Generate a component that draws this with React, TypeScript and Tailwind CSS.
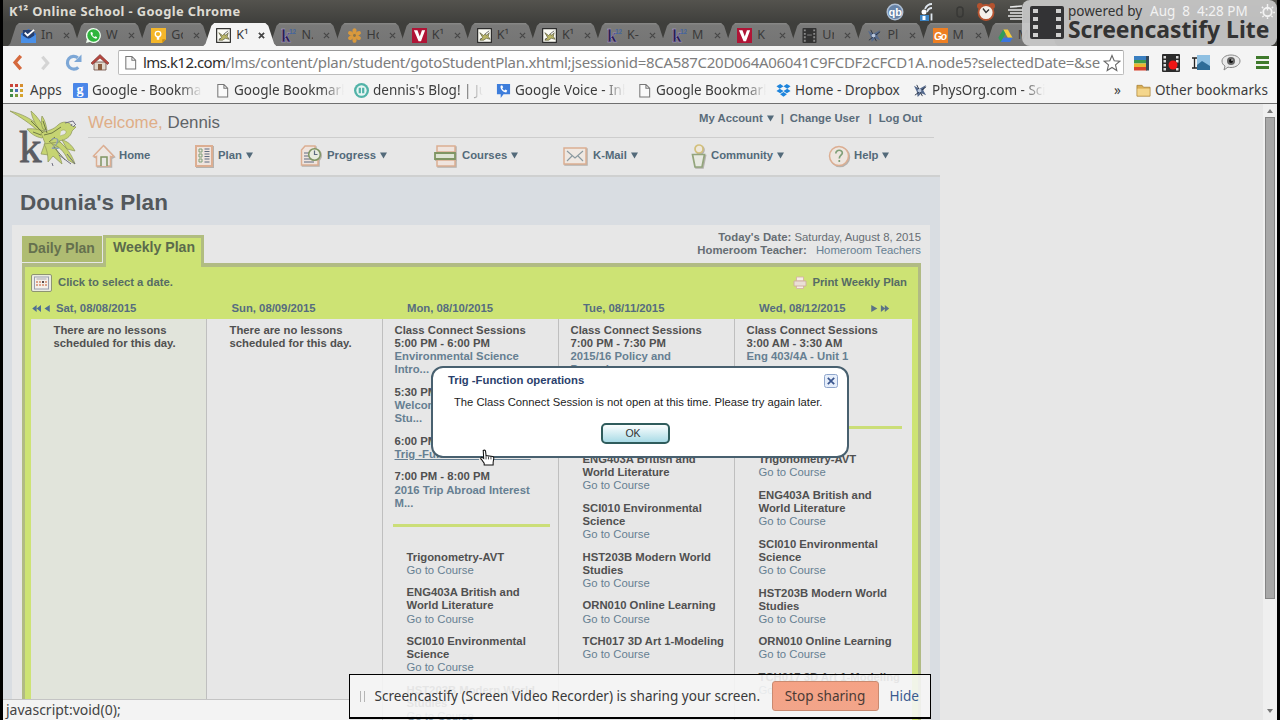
import React from 'react';

type Kind =
  | 'inbox' | 'whatsapp' | 'keep' | 'fly' | 'k12' | 'flower' | 'v' | 'film' | 'phys' | 'go' | 'drive'
  | 'google' | 'page' | 'blog' | 'voice' | 'dropbox' | 'folder';

function Fly() {
  return (
    <g>
      <path d="M3 5l4 3 2-2 1 2 3-3-1 4 2 3-4-1-3 2-4 0 3-3z" fill="#b9b565" stroke="#55563c" strokeWidth=".7" />
      <path d="M9 6l4-3M5 11l-2 1" stroke="#444" strokeWidth=".8" />
    </g>
  );
}

function Favicon({ kind }: { kind: Kind }) {
  return (
    <svg viewBox="0 0 16 16" className="size-[15px] shrink-0">
      {kind === 'inbox' && (
        <>
          <path d="M0 6l8-5 8 5v9H0z" fill="#2f6fd0" />
          <path d="M2 2h12v9H2z" fill="#27406f" />
          <path d="M4 5l3 3 7-6" fill="none" stroke="#fff" strokeWidth="2" />
          <path d="M0 7l8 5 8-5v9H0z" fill="#4a90e8" />
        </>
      )}
      {kind === 'whatsapp' && (
        <>
          <path d="M8 0a8 8 0 1 1-4 15l-4 1 1-4A8 8 0 0 1 8 0z" fill="#eefbef" />
          <circle cx="8" cy="8" r="6.6" fill="#2fb53d" />
          <path d="M5 4.5c-1 2 3 7 6 7l1-1.6-2-1.2-1 .9c-1-.4-2-1.4-2.300-2.300l.8-1L6.500 4.200z" fill="#fff" />
        </>
      )}
      {kind === 'keep' && (
        <>
          <path d="M0 0h16v12l-4 4H0z" fill="#f4b62a" />
          <path d="M16 12h-4v4z" fill="#c98d12" />
          <circle cx="7.500" cy="6.500" r="3" fill="none" stroke="#fff" strokeWidth="1.400" />
          <path d="M6.200 9.500h2.600v3H6.200z" fill="#fff" />
        </>
      )}
      {kind === 'fly' && (
        <>
          <rect x=".7" y=".7" width="14.600" height="14.600" fill="#fbfbf4" stroke="#222" strokeWidth="1.200" />
          <Fly />
        </>
      )}
      {kind === 'k12' && (
        <>
          <text x="0" y="15" fontFamily="Liberation Serif, serif" fontSize="19" fontWeight="700" fill="#2a1c52" stroke="#b5a9d8" strokeWidth=".4">k</text>
          <text x="8.500" y="6.500" fontFamily="Liberation Sans, sans-serif" fontSize="7" fontWeight="700" fill="#44659f">12</text>
        </>
      )}
      {kind === 'flower' && (
        <g fill="#d9993c">
          {[0, 60, 120, 180, 240, 300].map((a) => (
            <ellipse key={a} cx="8" cy="3.300" rx="2.200" ry="3" transform={`rotate(${a} 8 8)`} />
          ))}
          <circle cx="8" cy="8" r="2.800" />
          <circle cx="8" cy="8" r="1.500" fill="#8a7448" />
        </g>
      )}
      {kind === 'v' && (
        <>
          <rect width="16" height="16" fill="#b01436" />
          <path d="M2 2.500h3.800L8.300 9l2.300-6.500H14L9.600 14H7z" fill="#fff" />
        </>
      )}
      {kind === 'film' && (
        <>
          <rect x=".5" width="15" height="16" rx="1" fill="#333" />
          <path d="M2 1.500h2v2H2zM2 5.200h2v2H2zM2 8.900h2v2H2zM2 12.600h2v2H2zM12 1.500h2v2h-2zM12 5.200h2v2h-2zM12 8.900h2v2h-2zM12 12.600h2v2h-2z" fill="#888" />
          <path d="M5.500 7.500h5" stroke="#888" />
        </>
      )}
      {kind === 'phys' && (
        <>
          <path d="M1 3l6 3 7-4-3 6 3 5-5-2-4 4-1-6z" fill="#54698c" />
          <path d="M2 13L14 4M4 2l6 12" stroke="#2b3446" strokeWidth="1" />
          <circle cx="7" cy="8" r="2" fill="#b9c6dc" />
        </>
      )}
      {kind === 'go' && (
        <>
          <rect width="16" height="16" fill="#ee7f22" />
          <text x="1" y="12.500" fontFamily="Liberation Sans, sans-serif" fontSize="11" fontStyle="italic" fontWeight="700" fill="#fff" textLength="14">Go</text>
        </>
      )}
      {kind === 'drive' && (
        <>
          <path d="M5.500 1.500h5l5 9h-5z" fill="#f6cd3b" />
          <path d="M5.500 1.500L8 6l-5 9-2.700-4.500z" fill="#2f9d58" />
          <path d="M5.600 10.500h9.900L13 15H3z" fill="#3a76e0" />
        </>
      )}
      {kind === 'google' && (
        <>
          <rect width="16" height="16" rx="1" fill="#4a86e8" />
          <text x="3.800" y="11.500" fontFamily="Liberation Serif, serif" fontSize="15" fontWeight="700" fill="#fff">g</text>
        </>
      )}
      {kind === 'page' && (
        <path d="M3 1.500h6.500L13.500 5.500v9.500H3zM9.500 1.500v4h4" fill="#fafafa" stroke="#777" strokeWidth="1.100" />
      )}
      {kind === 'blog' && (
        <>
          <circle cx="8" cy="8" r="8" fill="#52b3a8" />
          <circle cx="8" cy="8" r="5.500" fill="#e8f6f4" />
          <path d="M5 5h2.400v6H5zM8.600 5H11v6H8.600z" fill="#52b3a8" />
        </>
      )}
      {kind === 'voice' && (
        <>
          <path d="M1 1h14v11H8l-3 4v-4H1z" fill="#3d7ddb" />
          <path d="M5 3c-1 3 2 7 6 7l1-2-2-1-1 1C8 7.500 7 6.500 6.700 5.500l1-1L6.500 2.500z" fill="#fff" />
        </>
      )}
      {kind === 'dropbox' && (
        <path d="M4.500 1L8 3.400 4 6 .5 3.500zM11.500 1L8 3.400 12 6l3.500-2.500zM.5 8.500L4 6l4 2.600-3.500 2.300zM15.500 8.500L12 6 8 8.600l3.500 2.300zM4.400 12L8 9.500l3.600 2.500L8 14.600z" fill="#1d84dc" />
      )}
      {kind === 'folder' && (
        <>
          <path d="M1 2.500h5.500L8 4.500h7V14H1z" fill="#d9ae55" stroke="#a57f34" strokeWidth=".8" />
          <path d="M1.500 6h13v7.500h-13z" fill="#f4d68c" />
        </>
      )}
    </svg>
  );
}

const tabs: { kind: Kind; label: string; active?: boolean }[] = [
  { kind: 'inbox', label: 'In' },
  { kind: 'whatsapp', label: 'W' },
  { kind: 'keep', label: 'Go' },
  { kind: 'fly', label: 'K¹', active: true },
  { kind: 'k12', label: 'N.' },
  { kind: 'flower', label: 'Ho' },
  { kind: 'v', label: 'K¹' },
  { kind: 'fly', label: 'K¹' },
  { kind: 'fly', label: 'K¹' },
  { kind: 'k12', label: 'K-' },
  { kind: 'k12', label: 'M' },
  { kind: 'v', label: 'K' },
  { kind: 'film', label: 'Ur' },
  { kind: 'phys', label: 'Pl' },
  { kind: 'go', label: 'M' },
  { kind: 'drive', label: 'M' },
];

function TabStrip() {
  return (
    <div className="flex h-[23px] shrink-0 bg-[#3f3f3c] pl-[5px]">
      {tabs.map((t, i) => (
        <div
          key={i}
          className={
            'mr-[-7.900px] flex h-[23px] w-[73px] shrink-0 items-center pt-px pl-[13px] [clip-path:polygon(0_100%,3%_90%,11%_12%,15%_0,85%_0,89%_12%,97%_90%,100%_100%)] ' +
            (t.active ? 'z-10 bg-[#f4f4f4] text-[#333]' : 'bg-linear-to-b from-[#8a8a88] via-[#7a7a79] via-10% to-[#747474] text-[#3a3a3a]')
          }
        >
          <Favicon kind={t.kind} />
          <span className="ml-[5px] w-[12px] overflow-hidden text-[12.500px] whitespace-nowrap">{t.label}</span>
          <svg viewBox="0 0 8 8" className={'ml-[10px] size-[7px] ' + (t.active ? 'text-[#444]' : 'text-[#484848]')}>
            <path d="M1 1l6 6M7 1L1 7" stroke="currentColor" strokeWidth={t.active ? 2 : 1.4} />
          </svg>
        </div>
      ))}
    </div>
  );
}

function Toolbar() {
  return (
    <div className="flex h-[33px] shrink-0 items-center bg-[#f4f4f4] pl-[7px]">
      <svg viewBox="0 0 14 18" className="h-[17px] w-[14px]">
        <path d="M11 2L5 9l6 7" fill="none" stroke="#d5693d" strokeWidth="3.600" />
      </svg>
      <svg viewBox="0 0 14 18" className="ml-[14px] h-[16px] w-[14px]">
        <path d="M4 2l6 7-6 7" fill="none" stroke="#d4d4d4" strokeWidth="3.600" />
      </svg>
      <svg viewBox="0 0 16 16" className="ml-[13px] size-[17px]">
        <path d="M12.500 12.500A6 6 0 1 1 12 3.500" fill="none" stroke="#7da7d6" strokeWidth="3" />
        <path d="M15.500.5v7H8.500z" fill="#7da7d6" />
      </svg>
      <svg viewBox="0 0 18 17" className="ml-[9px] h-[17px] w-[18px]">
        <path d="M3 8h12v8H3z" fill="#e0d7cb" stroke="#6c4a40" strokeWidth=".8" />
        <path d="M0 9L9 .5 18 9l-1.500 1.500L9 4 1.500 10.500z" fill="#b5473f" stroke="#77302c" strokeWidth=".6" />
        <path d="M7 10h4v6H7z" fill="#8a5a3c" />
      </svg>
      <div className="ml-[9px] flex h-[25px] w-[1006px] items-center rounded-[2px] border border-t-[#9a9a9a] border-[#bdbdbd] bg-white pl-[4px]">
        <Favicon kind="page" />
        <div className="ml-[5px] w-[960px] overflow-hidden text-[15px] tracking-[-0.284px] whitespace-nowrap text-[#7d7d7d]">
          <span className="tracking-[-0.550px] text-[#2e2e2e]">lms.k12.com</span>
          /lms/content/plan/student/gotoStudentPlan.xhtml;jsessionid=8CA587C20D064A06041C9FCDF2CFCD1A.node5?selectedDate=&amp;se
        </div>
        <svg viewBox="0 0 18 18" className="size-[18px] shrink-0">
          <path d="M9 1.500l2.200 5.300 5.600.4-4.300 3.700 1.300 5.600L9 13.500l-4.800 3 1.300-5.600L1.200 7.200l5.600-.4z" fill="none" stroke="#666" strokeWidth="1.100" />
        </svg>
      </div>
      <svg viewBox="0 0 17 16" className="ml-[9px] h-[16px] w-[17px]">
        <path d="M1 1h15v4H1z" fill="#3a7fc0" />
        <path d="M1 5h13v3.500H1z" fill="#3b9a4a" />
        <path d="M1 8.500h13V12H1z" fill="#eab630" />
        <path d="M1 12h13v3.500H1z" fill="#d8432e" />
        <path d="M13 1h3v14.500h-3z" fill="#33485c" />
      </svg>
      <svg viewBox="0 0 18 18" className="ml-[12px] size-[18px]">
        <rect width="18" height="18" rx="1" fill="#2b2b2b" />
        <path d="M1.500 2h2.500v2.500H1.500zM1.500 6h2.500v2.500H1.500zM1.500 10h2.500v2.500H1.500zM1.500 14h2.500v2.500H1.500zM14 2h2.500v2.500H14zM14 6h2.500v2.500H14zM14 14h2.500v2.500H14z" fill="#ddd" />
        <circle cx="11" cy="11" r="4.500" fill="#ef1616" />
      </svg>
      <svg viewBox="0 0 18 17" className="ml-[12px] h-[17px] w-[18px]">
        <path d="M5 1h13v15H5z" fill="#8fc0e2" />
        <path d="M5 11l5-4 8 5v4H5z" fill="#2f6d98" />
        <path d="M0 4h5M0 14h5M2.500 4v10" stroke="#222" strokeWidth="1.300" />
      </svg>
      <svg viewBox="0 0 20 17" className="ml-[11px] h-[17px] w-[20px]">
        <path d="M10 1c5 0 9 2.500 9 6s-4 6.500-9 6.500c-1 0-2 0-3-.4L3 16l1-4C2 11 1 9 1 7c0-3.500 4-6 9-6z" fill="#e9e9e9" stroke="#888" />
        <circle cx="10" cy="7" r="4" fill="#666" />
        <circle cx="10" cy="7" r="2" fill="#111" />
        <circle cx="11" cy="6" r=".8" fill="#fff" />
      </svg>
      <div className="ml-[15px] flex w-[13px] flex-col gap-[2px]">
        <div className="h-[3px] bg-[#3f7a2c]" />
        <div className="h-[3px] bg-[#3f7a2c]" />
        <div className="h-[3px] bg-[#3f7a2c]" />
      </div>
    </div>
  );
}

function Bookmark({ kind, label, slot, text }: { kind: Kind; label: string; slot: string; text: string }) {
  return (
    <div className={'flex shrink-0 items-center gap-[4px] ' + slot}>
      <Favicon kind={kind} />
      <span className={'overflow-hidden whitespace-nowrap ' + text}>{label}</span>
    </div>
  );
}

const fade = 'w-[110px] [mask-image:linear-gradient(to_right,black_80%,transparent)]';

function BookmarksBar() {
  return (
    <div className="flex h-[25px] shrink-0 items-center border-b border-[#6f6f6f] bg-[#f4f4f4] pb-px pl-[7px] text-[13.500px] text-[#3c3c3c]">
      <div className="grid w-[13px] shrink-0 grid-cols-3 gap-[2px]">
        {['bg-[#c9443a]', 'bg-[#c9443a]', 'bg-[#d68e2e]', 'bg-[#3f8a4a]', 'bg-[#4a6fb5]', 'bg-[#d6a32e]', 'bg-[#3f8a4a]', 'bg-[#7a9a3a]', 'bg-[#d6a32e]'].map((c, i) => (
          <div key={i} className={'size-[3px] ' + c} />
        ))}
      </div>
      <span className="ml-[7px] w-[43px] shrink-0">Apps</span>
      <Bookmark kind="google" label="Google - Bookmarks" slot="w-[142px]" text={fade} />
      <Bookmark kind="page" label="Google Bookmarks" slot="w-[139px]" text={fade} />
      <Bookmark kind="blog" label="dennis's Blog! | Just" slot="w-[142px]" text={fade} />
      <Bookmark kind="voice" label="Google Voice - Inbox" slot="w-[141px]" text={fade} />
      <Bookmark kind="page" label="Google Bookmarks" slot="w-[139px]" text={fade} />
      <Bookmark kind="dropbox" label="Home - Dropbox" slot="w-[137px]" text="w-[111px]" />
      <Bookmark kind="phys" label="PhysOrg.com - Science" slot="w-[201px]" text="w-[113px] [mask-image:linear-gradient(to_right,black_80%,transparent)]" />
      <span className="w-[22px] shrink-0">»</span>
      <Bookmark kind="folder" label="Other bookmarks" slot="w-[137px]" text="tracking-[0.080px]" />
    </div>
  );
}

function Tray() {
  return (
    <div className="flex items-center">
      <svg viewBox="0 0 18 18" className="size-[18px]">
        <circle cx="9" cy="9" r="8.500" fill="#aebfd4" />
        <circle cx="9" cy="9" r="7" fill="#6683a8" />
        <text x="2.500" y="12.500" fontFamily="Liberation Sans, sans-serif" fontSize="11" fontWeight="700" fill="#fff">qb</text>
      </svg>
      <svg viewBox="0 0 18 18" className="ml-[16px] size-[18px]">
        <circle cx="4" cy="9" r="2.500" fill="#fff" />
        <path d="M0 12h9v6H0z" fill="#3b84c4" />
        <path d="M2.500 13h3v4h-3z" fill="#fff" />
        <path d="M11.500 10.500v7M5 6C6.500 2.500 9 1 12 1M7 9c.8-2.500 2.500-4 5-4" stroke="#dfe6ee" strokeWidth="1.800" fill="none" />
      </svg>
      <svg viewBox="0 0 10 14" className="ml-[17px] h-[14px] w-[10px]">
        <rect x="2" y="2" width="6" height="10" rx="3" fill="none" stroke="#383836" strokeWidth="1.500" />
      </svg>
      <svg viewBox="0 0 20 20" className="ml-[11px] h-[20px] w-[20px]">
        <circle cx="4" cy="4" r="3" fill="#b5532f" />
        <circle cx="16" cy="4" r="3" fill="#b5532f" />
        <circle cx="10" cy="10.500" r="7.500" fill="#f4f0ea" stroke="#b5532f" strokeWidth="1.800" />
        <path d="M7 6.500l3 4 3-3" stroke="#333" fill="none" strokeWidth="1.400" />
      </svg>
      <svg viewBox="0 0 16 16" className="ml-[11px] size-[16px]">
        <path d="M3 3l12-1M1 6h15M3 9h13M1 12h15M3 15h13" stroke="#e8e8e8" strokeWidth="1.600" />
      </svg>
    </div>
  );
}

function Watermark() {
  return (
    <div className="absolute top-0 right-0 z-30 flex h-[46px] w-[255px] rounded-[8px] bg-[#cccccc]/90 pl-[8px] text-[#333]">
      <svg viewBox="0 0 34 34" className="mt-[6px] size-[34px] shrink-0">
        <rect width="34" height="33" rx="2" fill="#333335" />
        <path d="M3 3h5v4H3zM3 11h5v4H3zM3 19h5v4H3zM3 27h5v4H3zM26 3h5v4h-5zM26 11h5v4h-5zM26 19h5v4h-5zM26 27h5v4h-5z" fill="#cfcfcf" />
      </svg>
      <div className="ml-[4px] flex flex-col whitespace-nowrap">
        <div className="flex h-[20px] items-center pt-[2px] text-[13.500px] leading-[20px]">
          <span className="w-[82px]">powered by</span>
          <span className="text-[13.500px] text-[#f2f2f2]">Aug&nbsp; 8&nbsp; 4:28 PM</span>
          <svg viewBox="0 0 16 16" className="ml-[12px] size-[15px]">
            <circle cx="8" cy="8.500" r="4.500" fill="none" stroke="#f2f2f2" strokeWidth="2" />
            <path d="M8 0v7M2 3l1.500 1.500M14 3l-1.500 1.500M0 9h2M14 9h2M2.500 14l1.500-1.500M13.500 14L12 12.500M8 14v2" stroke="#f2f2f2" strokeWidth="1.500" />
          </svg>
        </div>
        <div className="text-[22.900px] leading-[20px] font-bold">Screencastify Lite</div>
      </div>
    </div>
  );
}

const caret = <svg viewBox="0 0 8 7" className="ml-[4px] h-[7px] w-[7px]"><path d="M0 0h8L4 7z" fill="#536a7a" /></svg>;

function NavIcon({ kind }: { kind: string }) {
  const o = '#dcae92';
  return (
    <svg viewBox="0 0 24 24" className="size-[24px] shrink-0 drop-shadow-[1px_1px_0.500px_rgba(90,80,70,0.35)]" fill="none" strokeWidth="1.500" stroke={o}>
      {kind === 'home' && (
        <>
          <path d="M1.500 12L11.500 1.500 21.500 12l-2 1-1-.5V22h-14v-9.500l-1 .5z" fill="#ece7e3" />
          <path d="M9 22v-9h6v9" stroke="#7f9563" fill="#e7e7e4" />
        </>
      )}
      {kind === 'plan' && (
        <>
          <path d="M2 2h16v20H2z" fill="#efe4de" strokeWidth="2" />
          <path d="M5 5h3v3H5zM5 10h3v3H5zM5 15h3v3H5z" stroke="#7f9f78" strokeWidth="1" />
          <path d="M10.500 5h5M10.500 7.500h5M10.500 10h5M10.500 12.500h5M10.500 15h5M10.500 18h5" stroke="#5e6b80" strokeWidth="1" />
        </>
      )}
      {kind === 'progress' && (
        <>
          <path d="M5 2h10v5h3v14H1.500V6z" fill="#efe4de" />
          <path d="M4 9h6M4 12h6M4 15h7M4 18h10" stroke="#5e6b80" strokeWidth="1.200" />
          <circle cx="14.500" cy="10.500" r="5.800" fill="#e9ebdf" stroke="#7f9563" />
          <path d="M14.500 6.500v4h3" stroke="#5e6b80" strokeWidth="1.200" />
        </>
      )}
      {kind === 'courses' && (
        <>
          <path d="M3 2h18v6H3z" fill="#efe4de" />
          <path d="M3 16h18v6H3z" fill="#efe4de" />
          <path d="M1 9h20v6H1z" fill="#dfe5d5" stroke="#7f9563" strokeWidth="1.800" />
        </>
      )}
      {kind === 'mail' && (
        <>
          <path d="M1 4h22v16H1z" fill="#efe8e2" />
          <path d="M4 7l8 7 8-7M4 17l5-5M20 17l-5-5" stroke="#8b9aa0" strokeWidth="1.100" />
        </>
      )}
      {kind === 'community' && (
        <>
          <circle cx="9" cy="5" r="4" stroke="#d3c07c" fill="#eee8dc" strokeWidth="1.700" />
          <path d="M2.500 10.500h12L12 23H5z" stroke="#93a57c" fill="#e7e9e1" strokeWidth="1.700" />
        </>
      )}
      {kind === 'help' && (
        <>
          <circle cx="11" cy="12" r="9.500" fill="#eee6e0" />
          <path d="M7.800 9.500c0-4.500 7-4 6.500-.3-.3 2-3 2.300-3 5.300M11.300 16v2" stroke="#7f9f78" strokeWidth="1.700" />
        </>
      )}
    </svg>
  );
}

const nav = [
  { kind: 'home', label: 'Home', slot: 'w-[102px]', gap: 'ml-[3px]', arrow: false },
  { kind: 'plan', label: 'Plan', slot: 'w-[106px]', gap: 'ml-0', arrow: true },
  { kind: 'progress', label: 'Progress', slot: 'w-[134px]', gap: 'ml-[3px]', arrow: true },
  { kind: 'courses', label: 'Courses', slot: 'w-[129px]', gap: 'ml-[4px]', arrow: true },
  { kind: 'mail', label: 'K-Mail', slot: 'w-[127px]', gap: 'ml-[6px]', arrow: true },
  { kind: 'community', label: 'Community', slot: 'w-[138px]', gap: 'ml-[-3px]', arrow: true },
  { kind: 'help', label: 'Help', slot: 'w-[90px]', gap: 'ml-[2px]', arrow: true },
];

function Logo() {
  return (
    <svg viewBox="0 0 72 60" className="h-[60px] w-[72px] shrink-0">
      <text x="10" y="53" fontFamily="Liberation Serif, serif" fontSize="45" fill="#5b5c62" stroke="#5b5c62" strokeWidth=".8">k</text>
      <g fill="#c6d472" stroke="#8b9458" strokeWidth=".7" strokeLinejoin="round">
        <path d="M1 2c12 3 23 8 32 18l-3 3C21 14 11 8 1 2z" />
        <path d="M22 2c6 5 11 12 14 20l-5-1C26 15 23 9 22 2z" />
        <path d="M33 7c3 4 4 9 5 14l-4-1C32 16 32 11 33 7z" />
        <path d="M18 20c8-1 14 1 20 4l-5 5c-6-1-11-4-15-9z" />
        <path d="M32 24c8-3 12-3 17-8 4-4 11-4 14 1l4 1-4 4c-1 6-7 9-13 10l8 8-11-2-7 8-8-1 4-11z" />
        <path d="M41 34c8 2 14 8 18 17l7 4c-3-9-8-16-15-22z" />
        <path d="M35 35c3 5 4 11 4 18l5-6 9 8c-2-9-6-16-11-21z" />
        <path d="M53 31c5 1 10 5 13 11l-8-2z" />
      </g>
      <path d="M52 22c2-2 6-1 5 2-1 2-4 2-6 3" fill="#e7e7e7" stroke="#a3ad68" strokeWidth=".7" />
      <path d="M22 12l12 12M34 12l4 12M35 26l8-2 9-6M40 33l6-5M45 38l11 13M24 23l8 3" fill="none" stroke="#66713f" strokeWidth=".9" />
      <text x="42" y="40" fontFamily="Liberation Serif, serif" fontSize="17" fill="#8aa0a8">2</text>
      <path d="M56 14l8-2M64 12l2 3M64 18l3-3M62 17l1-2M50 46l12 9M58 45l8 10M43 54l1 3" fill="none" stroke="#6f6e80" strokeWidth="1" />
    </svg>
  );
}

function SiteHeader() {
  return (
    <div className="flex h-[73px] border-b-[2px] border-[#cfd0d0] bg-[#e7e7e7] pt-[5px] pl-[6px]">
      <Logo />
      <div className="ml-[7px] flex w-[846px] flex-col">
        <div className="flex h-[29px] justify-between border-b border-[#cdcdcd] pr-[12px]">
          <div className="text-[16.900px] leading-[28px] text-[#5f6468]">
            <span className="text-[#dfae88]">Welcome,</span> Dennis
          </div>
          <div className="flex h-[18px] items-center text-[11.300px] font-bold text-[#5a6c7a]">
            <span>My Account</span>
            {caret}
            <span className="ml-[7px]">|</span>
            <span className="ml-[6px]">Change User</span>
            <span className="ml-[9px]">|</span>
            <span className="ml-[7px]">Log Out</span>
          </div>
        </div>
        <div className="ml-[4px] flex h-[35px] items-center text-[11.300px] font-bold text-[#536a7a]">
          {nav.map((n) => (
            <div key={n.kind} className={'flex shrink-0 items-center ' + n.slot}>
              <NavIcon kind={n.kind} />
              <span className={n.gap}>{n.label}</span>
              {n.arrow && caret}
            </div>
          ))}
        </div>
      </div>
    </div>
  );
}

type Session = { time: string; name: string; hover?: boolean };

const sessions: Record<string, Session[]> = {
  mon: [
    { time: '5:00 PM - 6:00 PM', name: 'Environmental Science Intro...' },
    { time: '5:30 PM - 6:30 PM', name: 'Welcome New Students Stu...' },
    { time: '6:00 PM - 7:00 PM', name: 'Trig -Function operations', hover: true },
    { time: '7:00 PM - 8:00 PM', name: '2016 Trip Abroad Interest M...' },
  ],
  tue: [{ time: '7:00 PM - 7:30 PM', name: '2015/16 Policy and Procedu...' }],
  wed: [{ time: '3:00 AM - 3:30 AM', name: 'Eng 403/4A - Unit 1' }],
};

const courses = [
  'Trigonometry-AVT',
  'ENG403A British and World Literature',
  'SCI010 Environmental Science',
  'HST203B Modern World Studies',
  'ORN010 Online Learning',
  'TCH017 3D Art 1-Modeling',
];

function Day({ list, width, gap }: { list: Session[]; width: string; gap: string }) {
  return (
    <div className={'shrink-0 border-r border-[#bfbfbf] pt-[5px] pl-[11.500px] leading-[13.050px] ' + width}>
      <div className="font-bold">Class Connect Sessions</div>
      {list.map((s) => (
        <div key={s.time} className="mb-[9.700px] w-[142px] font-bold">
          <div>{s.time}</div>
          <div className={'text-[#667f92] ' + (s.hover ? 'underline' : '')}>{s.name}</div>
        </div>
      ))}
      <div className={'ml-[-2px] h-[3px] w-[157px] bg-[#cbde78] ' + gap} />
      <div className="mt-[24px] flex flex-col gap-[9.700px] pl-[12px]">
        {courses.map((c) => (
          <div key={c} className="w-[145px]">
            <div className={'font-bold ' + (c.length > 24 ? 'w-[136px]' : '')}>{c}</div>
            <div className="text-[#667f92]">Go to Course</div>
          </div>
        ))}
      </div>
    </div>
  );
}

function EmptyDay({ className }: { className: string }) {
  return (
    <div className={'shrink-0 border-r border-[#bfbfbf] pt-[5px] pl-[22.500px] leading-[13.050px] font-bold ' + className}>
      There are no lessons
      <br />
      scheduled for this day.
    </div>
  );
}

function Plan() {
  return (
    <div className="h-[600px] w-[937px] bg-[#d9dde2]">
      <h1 className="h-[48px] pt-[11px] pl-[17px] text-[22.500px] leading-[30px] font-bold text-[#53585c]">Dounia's Plan</h1>
      <div className="ml-[9px] h-[600px] w-[918px] bg-[#e7e7e7] pt-[4px] pl-[10px]">
        <div className="flex h-[34px] w-[899px] items-end">
          <div className="mb-[1px] h-[26px] w-[80px] bg-[#afbc72] pl-[6px] text-[14px] leading-[25px] font-bold text-[#65704e]">Daily Plan</div>
          <div className="z-10 mb-[-4px] ml-[1px] h-[32px] w-[101px] border-[3px] border-b-0 border-[#b1bd80] bg-[#cde374] pl-[7px] text-[14.100px] leading-[19px] font-bold text-[#5b6b4c]">
            Weekly Plan
          </div>
          <div className="mb-[6px] ml-auto text-right text-[11.350px] leading-[13px] text-[#666d73]">
            <div>
              <b>Today's Date:</b> Saturday, August 8, 2015
            </div>
            <div>
              <b>Homeroom Teacher:</b> <span className="ml-[6px] text-[#667f92]">Homeroom Teachers</span>
            </div>
          </div>
        </div>
        <div className="h-[500px] w-[899px] border-[3px] border-t-[4px] border-[#b1bb84] bg-[#cde374] pl-[6px] text-[11.300px] text-[#505050]">
          <div className="flex h-[31px] items-center font-bold text-[#566c64]">
            <svg viewBox="0 0 21 18" className="h-[18px] w-[21px]">
              <rect x=".5" y=".5" width="20" height="17" rx="1.500" fill="#ebebe0" stroke="#8d9472" />
              <rect x="3.500" y="3" width="14" height="12" fill="#f4f0ea" stroke="#9a9fb0" />
              <path d="M5.500 5h10" stroke="#a9a9b4" />
              <path d="M5 7h2v2H5zM8 7h2v2H8zM14 7h2v2h-2zM5 10h2v2H5zM8 10h2v2H8zM11 10h2v2h-2zM14 10h2v2h-2z" fill="#dda38a" />
              <path d="M11 7h2v2h-2z" fill="#5a4a4a" />
            </svg>
            <span className="ml-[6px]">Click to select a date.</span>
            <svg viewBox="0 0 14 13" className="ml-auto h-[13px] w-[14px]">
              <path d="M3.500 1h7v4h-7zM3.500 9h7v3.500h-7z" fill="#f6eee8" stroke="#d6b3a4" strokeWidth=".9" />
              <path d="M1 5h12v5H1z" fill="#eadfd6" stroke="#cfae9f" strokeWidth=".9" />
            </svg>
            <span className="mr-[11px] ml-[5px]">Print Weekly Plan</span>
          </div>
          <div className="flex h-[21px] items-center font-bold text-[#566c80]">
            <svg viewBox="0 0 20 8" className="h-[7px] w-[20px]">
              <path d="M5 0v8L0 4zM10 0v8L5 4zM20 0v8l-6-4z" fill="#4f6f94" />
            </svg>
            <span className="ml-[5px] w-[175.500px]">Sat, 08/08/2015</span>
            <span className="w-[175.500px]">Sun, 08/09/2015</span>
            <span className="w-[176px]">Mon, 08/10/2015</span>
            <span className="w-[176px]">Tue, 08/11/2015</span>
            <span className="w-[111px]">Wed, 08/12/2015</span>
            <svg viewBox="0 0 20 8" className="h-[7px] w-[20px]">
              <path d="M0 0l7 4-7 4zM11 0l5 4-5 4zM15.500 0l5 4-5 4z" fill="#5b7386" />
            </svg>
          </div>
          <div className="flex h-[460px] w-[881px] overflow-hidden bg-[#e7e7e7]">
            <EmptyDay className="w-[176px] bg-[#e1e4db]" />
            <EmptyDay className="w-[176px]" />
            <Day list={sessions.mon} width="w-[176px]" gap="mt-[14px]" />
            <Day list={sessions.tue} width="w-[176px]" gap="mt-[14px]" />
            <Day list={sessions.wed} width="w-[176px] border-r-0" gap="mt-[63px]" />
          </div>
        </div>
      </div>
    </div>
  );
}

function Dialog() {
  return (
    <div className="absolute top-[366px] left-[428px] z-20 flex h-[92px] w-[418px] flex-col rounded-[12px] border-2 border-[#48606f] bg-white pt-[3px] font-['Liberation_Sans',sans-serif]">
      <div className="flex h-[18px] items-center justify-between pr-[9px] pl-[15px] text-[11.300px] font-bold text-[#2a3f6c]">
        Trig -Function operations
        <svg viewBox="0 0 14 14" className="mt-px size-[14px]">
          <rect x=".5" y=".5" width="13" height="13" rx="2" fill="#e6eefa" stroke="#8fa6cc" />
          <path d="M3.800 3.800l6.400 6.400M10.200 3.800l-6.400 6.400" stroke="#3a568f" strokeWidth="1.700" />
        </svg>
      </div>
      <div className="mt-[4px] h-[18px] pl-[21px] text-[11.240px] leading-[18px] text-[#1c1c1c]">
        The Class Connect Session is not open at this time. Please try again later.
      </div>
      <button className="mt-[12px] ml-[168px] h-[21px] w-[69px] rounded-[5px] border-2 border-[#2f5c5c] bg-linear-to-b from-[#fbfefe] to-[#a9dbe6] pr-[5px] text-[10.500px] leading-[17px] text-[#333]">
        OK
      </button>
    </div>
  );
}

function SharingBar() {
  return (
    <div className="absolute top-[674px] left-[346px] z-20 flex h-[45px] w-[582px] items-center border border-b-2 border-black bg-[#f5f5f5]/90 text-[13.550px] whitespace-nowrap text-[#3a3a3a]">
      <div className="ml-[10px] h-[11px] w-[5px] border-x border-[#b5b5b5]" />
      <span className="ml-[9.500px] w-[397px]">Screencastify (Screen Video Recorder) is sharing your screen.</span>
      <button className="h-[30px] w-[107px] rounded-[3px] border border-[#c98a70] bg-linear-to-b from-[#f5a285] to-[#f2a58a] text-[#4a3a35]">Stop sharing</button>
      <span className="ml-[11px] text-[#3a5a8f]">Hide</span>
    </div>
  );
}

export default function App() {
  return (
    <div className="relative flex h-[720px] w-[1280px] flex-col overflow-hidden border-r-[3px] border-l-[3px] border-black bg-[#e7e7e7] font-['Noto_Sans',sans-serif]">
      <div className="flex h-[23px] shrink-0 items-center bg-linear-to-b from-[#54534e] to-[#3f3f3c] pl-[6px]">
        <span className="w-[877px] text-[12.900px] font-bold tracking-[0.370px] text-[#dedbd3]">K¹² Online School - Google Chrome</span>
        <Tray />
      </div>
      <TabStrip />
      <Toolbar />
      <BookmarksBar />
      <div className="flex min-h-0 flex-1">
        <div className="w-[1260px] overflow-hidden font-['Liberation_Sans',sans-serif]">
          <div className="w-[937px]">
            <SiteHeader />
            <Plan />
          </div>
        </div>
        <div className="flex w-[14px] flex-col items-center bg-[#efefef]">
          <svg viewBox="0 0 6 4" className="mt-[5px] h-[4px] w-[6px]"><path d="M0 4h6L3 0z" fill="#777" /></svg>
          <div className="mt-[4px] h-[482px] w-[10px] border border-[#858585] bg-[#a8a8a8]" />
          <svg viewBox="0 0 6 4" className="mt-auto mb-[7px] h-[4px] w-[6px]"><path d="M0 0h6L3 4z" fill="#777" /></svg>
        </div>
      </div>
      <Watermark />
      <Dialog />
      <svg viewBox="0 0 16 18" className="absolute top-[449px] left-[476px] z-20 h-[17px] w-[16px]">
        <path d="M4 1.500c1.500-.8 2.300 0 2.500 1L7 7l7 1c1 .3 1.300 1 1.200 2l-.7 4v3H5v-2L1.500 10c-.4-1 .7-1.600 1.700-.9L4.500 10z" fill="#fff" stroke="#111" strokeWidth="1.100" />
        <path d="M7 7v4M9.600 8v3M12.200 8v3" stroke="#111" strokeWidth=".8" />
      </svg>
      <div className="absolute bottom-0 left-0 z-10 h-[21px] w-[347px] border-t border-[#c4c4c4] bg-[#f3f3f3] pl-[3px] text-[14px] leading-[20px] text-[#444]">javascript:void(0);</div>
      <SharingBar />
    </div>
  );
}
